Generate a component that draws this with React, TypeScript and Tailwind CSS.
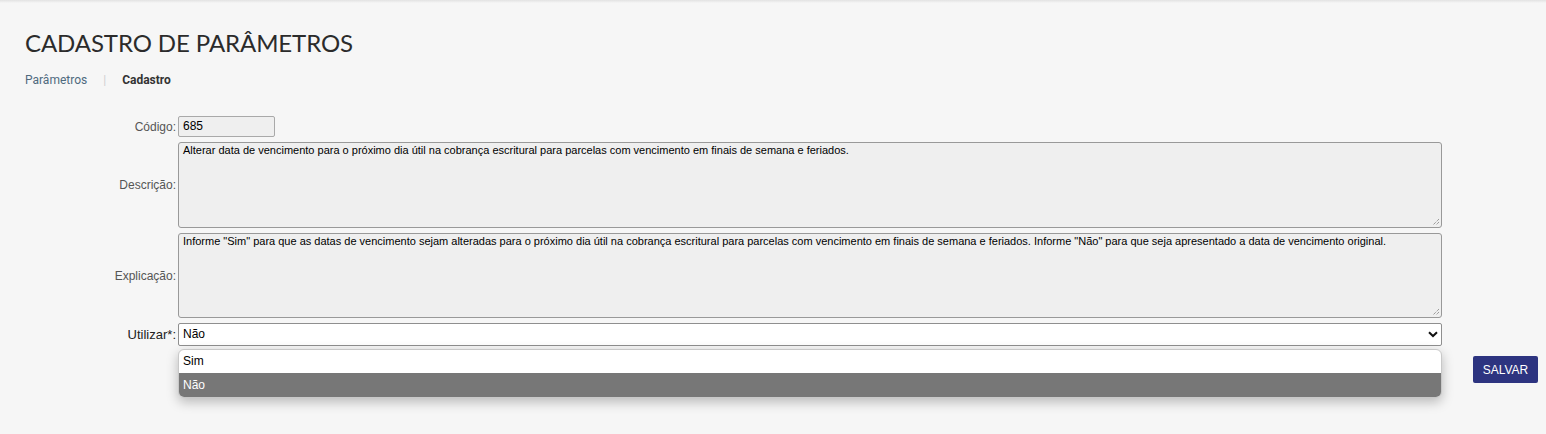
import React from "react";

const arial = { fontFamily: '"Liberation Sans", Arial, sans-serif' };

export default function App() {
  return (
    <div className="w-[1546px] h-[434px] bg-[#f6f6f6] relative overflow-hidden" style={arial}>
      <div className="h-[3px] bg-gradient-to-b from-[#e2e2e2] to-[#f6f6f6]" />
      <div className="pl-[25px] pt-[26px]">
        <h1 className="text-[24px] leading-[28px] text-[#2b2b2b] tracking-[-0.1px]" style={{ fontFamily: 'Lato, "Open Sans", sans-serif' }}>
          CADASTRO DE PARÂMETROS
        </h1>
        <div className="mt-[16px] flex items-center text-[12px] leading-[14px]" style={{ fontFamily: 'Roboto, "Liberation Sans", sans-serif' }}>
          <span className="text-[#4e6a7e]">Parâmetros</span>
          <span className="text-[#d0d0d0] mx-[16px]">|</span>
          <span className="text-[#333] font-bold">Cadastro</span>
        </div>
      </div>

      <div className="mt-[29px] flex flex-col gap-[5px]">
        <div className="flex items-center">
          <label className="w-[178px] text-right text-[12px] text-[#555] pr-[2px]">Código:</label>
          <div className="w-[97px] h-[21px] bg-[#efefef] border border-[#a9a9a9] rounded-[2px] px-[4px] text-[12px] leading-[19px] text-black">685</div>
        </div>
        <div className="flex items-center">
          <label className="w-[178px] text-right text-[12px] text-[#555] pr-[2px]">Descrição:</label>
          <div className="relative w-[1264px] h-[86px] bg-[#efefef] border border-[#999] rounded-[3px] px-[4px] pt-[1px] text-[11px] leading-[13px] text-black">
            Alterar data de vencimento para o próximo dia útil na cobrança escritural para parcelas com vencimento em finais de semana e feriados.
            <Grip />
          </div>
        </div>
        <div className="flex items-center">
          <label className="w-[178px] text-right text-[12px] text-[#555] pr-[2px]">Explicação:</label>
          <div className="relative w-[1264px] h-[85px] bg-[#efefef] border border-[#999] rounded-[3px] px-[4px] pt-[1px] text-[11px] leading-[13px] text-black">
            Informe "Sim" para que as datas de vencimento sejam alteradas para o próximo dia útil na cobrança escritural para parcelas com vencimento em finais de semana e feriados. Informe "Não" para que seja apresentado a data de vencimento original.
            <Grip />
          </div>
        </div>
        <div className="flex items-center">
          <label className="w-[178px] text-right text-[13px] text-[#222] pr-[2px]">Utilizar*:</label>
          <div className="relative w-[1264px] h-[23px] bg-white border border-[#8f8f8f] rounded-[2px] pl-[4px] text-[12px] leading-[21px] text-black flex items-center justify-between pr-[3px]">
            <span>Não</span>
            <svg width="10" height="7" viewBox="0 0 10 7">
              <path d="M1 1.2 L5 5 L9 1.2" stroke="#111" strokeWidth="2" fill="none" />
            </svg>
            <div className="absolute left-[-1px] top-[25px] w-[1264px] bg-white rounded-[6px] border border-[#c8c8c8] overflow-hidden shadow-[0_4px_12px_rgba(0,0,0,0.25)] z-10">
              <div className="h-[23px] pl-[4px] flex items-center text-[12px] text-black">Sim</div>
              <div className="h-[24px] pl-[4px] flex items-center text-[12px] text-white bg-[#777]">Não</div>
            </div>
          </div>
        </div>
      </div>

      <div className="flex justify-end pr-[8px] mt-[10px]">
        <button className="h-[27px] w-[65px] bg-[#2d3480] text-white text-[12px] rounded-[2px]">SALVAR</button>
      </div>
    </div>
  );
}

function Grip() {
  return (
    <svg className="absolute right-[1px] bottom-[1px]" width="9" height="9" viewBox="0 0 9 9">
      <path d="M8 2 L2 8 M8 5 L5 8" stroke="#777" strokeWidth="1" strokeDasharray="1 1" />
    </svg>
  );
}
